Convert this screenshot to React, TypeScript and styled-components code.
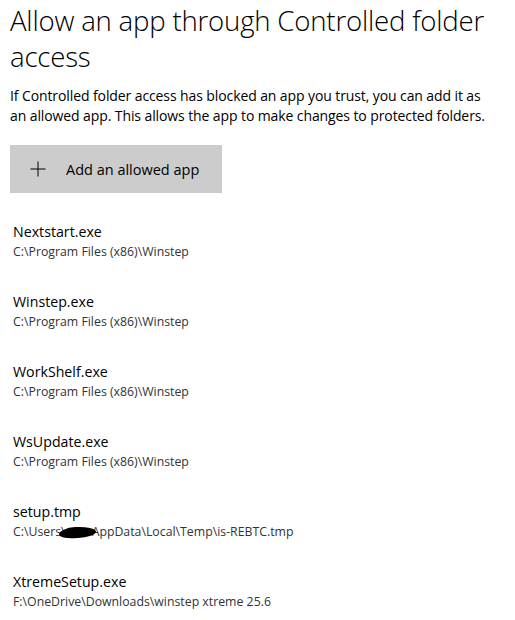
import styled, { createGlobalStyle } from "styled-components";

const GlobalStyle = createGlobalStyle`
    body {
        margin: 0;
        background: #ffffff;
        font-family: "Open Sans", "Noto Sans", sans-serif;
        color: #000000;
    }
`;

interface AllowedApp {
    name: string;
    path: string;
    redacted?: boolean;
}

const apps: AllowedApp[] = [
    { name: "Nextstart.exe", path: "C:\\Program Files (x86)\\Winstep" },
    { name: "Winstep.exe", path: "C:\\Program Files (x86)\\Winstep" },
    { name: "WorkShelf.exe", path: "C:\\Program Files (x86)\\Winstep" },
    { name: "WsUpdate.exe", path: "C:\\Program Files (x86)\\Winstep" },
    { name: "setup.tmp", path: "AppData\\Local\\Temp\\is-REBTC.tmp", redacted: true },
    { name: "XtremeSetup.exe", path: "F:\\OneDrive\\Downloads\\winstep xtreme 25.6" },
];

const PlusIcon = () => (
    <svg width="16" height="16" viewBox="0 0 16 16">
        <path d="M8 0.5V15.5M0.5 8H15.5" stroke="#000" strokeWidth="1" fill="none" />
    </svg>
);

const App = () => {
    return (
        <>
            <GlobalStyle />
            <Page>
                <Title>Allow an app through Controlled folder access</Title>
                <Description>
                    If Controlled folder access has blocked an app you trust, you can add it as an
                    allowed app. This allows the app to make changes to protected folders.
                </Description>
                <AddButton type="button">
                    <PlusIcon />
                    <span>Add an allowed app</span>
                </AddButton>
                <AppList>
                    {apps.map((app) => (
                        <AppItem key={app.name}>
                            <AppName>{app.name}</AppName>
                            <AppPath>
                                {app.redacted ? (
                                    <>
                                        C:\Users\<Redacted />
                                        {app.path}
                                    </>
                                ) : (
                                    app.path
                                )}
                            </AppPath>
                        </AppItem>
                    ))}
                </AppList>
            </Page>
        </>
    );
};

export default App;

const Page = styled.div`
    width: 515px;
    padding: 2px 10px 0 10px;
    box-sizing: border-box;
`;

const Title = styled.h1`
    margin: 0;
    font-size: 27.6px;
    font-weight: 300;
    line-height: 36px;
    letter-spacing: -0.2px;
    color: #000;
`;

const Description = styled.p`
    margin: 12px 0 0 0;
    max-width: 484px;
    font-size: 14px;
    line-height: 20px;
    letter-spacing: -0.1px;
    color: #000;
`;

const AddButton = styled.button`
    margin-top: 19px;
    width: 212px;
    height: 48px;
    border: none;
    background: #cccccc;
    display: flex;
    align-items: center;
    gap: 20px;
    padding: 0 0 0 20px;
    font-family: inherit;
    font-size: 14.5px;
    color: #000;
    cursor: pointer;
`;

const AppList = styled.ul`
    list-style: none;
    margin: 29px 0 0 0;
    padding: 0 0 0 3px;
    display: flex;
    flex-direction: column;
    gap: 30px;
`;

const AppItem = styled.li`
    display: flex;
    flex-direction: column;
    height: 40px;
`;

const AppName = styled.span`
    font-size: 14.2px;
    line-height: 20px;
    color: #000;
`;

const AppPath = styled.span`
    font-size: 12.3px;
    line-height: 20px;
    color: #333;
    display: flex;
    align-items: center;
    white-space: pre;
`;

const Redacted = styled.span`
    display: inline-block;
    width: 37px;
    height: 11px;
    margin: 0 -4px 0 -7px;
    background: #000;
    border-radius: 45% 55% 50% 40% / 60% 50% 50% 40%;
    transform: rotate(-3deg);
`;
